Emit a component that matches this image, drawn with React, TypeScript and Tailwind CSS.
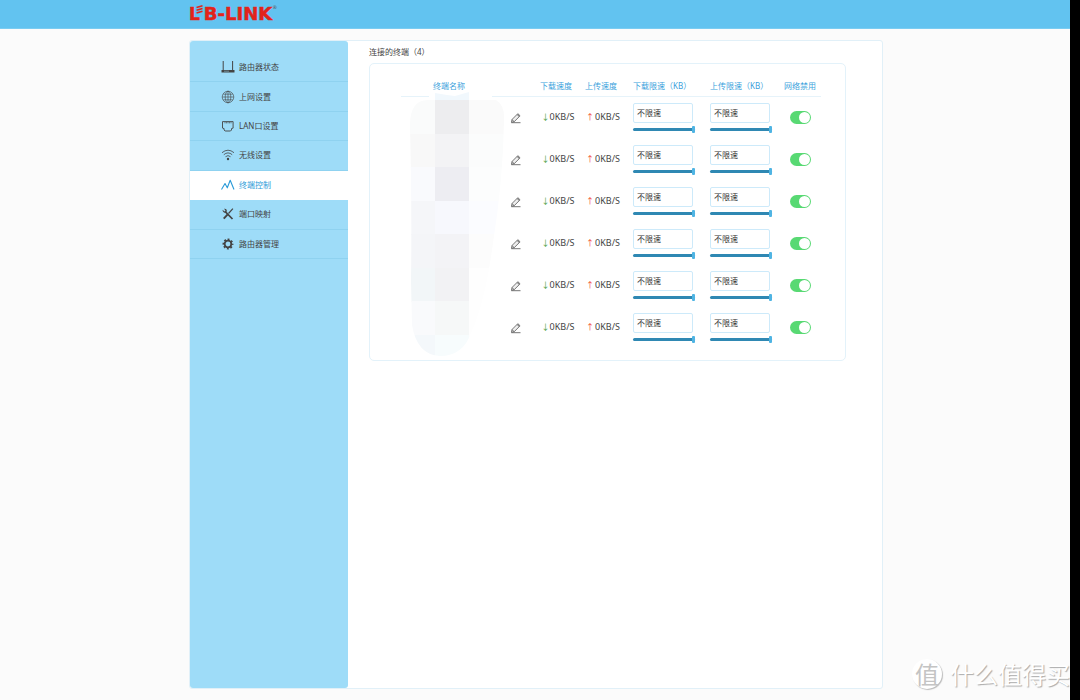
import type { ReactNode } from 'react';

const FONT = "font-['Noto_Sans','Noto_Sans_CJK_SC',sans-serif]";

function RouterIcon() {
  return (
    <svg viewBox="0 0 14 14" className="h-[14px] w-[14px]" fill="none" stroke="currentColor" strokeWidth="1">
      <path d="M2.2 1v9M11.6 1v9" />
      <path d="M.5 10h13v2.5H.5z" fill="currentColor" stroke="none" />
      <path d="M3 11.2h5" stroke="#9edcf8" strokeWidth=".5" />
    </svg>
  );
}

function GlobeIcon() {
  return (
    <svg viewBox="0 0 14 14" className="h-[14px] w-[14px]" fill="none" stroke="currentColor" strokeWidth=".6">
      <circle cx="7" cy="7" r="5.8" />
      <ellipse cx="7" cy="7" rx="2.8" ry="5.8" />
      <path d="M7 1.2v11.6M1.200 7h11.600M2.200 4.200h9.600M2.200 9.800h9.600" />
    </svg>
  );
}

function LanIcon() {
  return (
    <svg viewBox="0 0 14 14" className="h-[14px] w-[14px]" fill="none" stroke="currentColor" strokeWidth=".9">
      <path d="M1.500 2.600h10.600v6.500l-1.600.5v1.400l-1 1H4.100l-1-1V9.600L1.500 9.100z" />
      <path d="M4 3v1.400M5.500 3v1.400M7 3v1.400M8.500 3v1.400M10 3v1.400" strokeWidth=".6" />
    </svg>
  );
}

function WifiIcon() {
  return (
    <svg viewBox="0 0 14 14" className="h-[14px] w-[14px]" fill="none" stroke="currentColor" strokeWidth=".8">
      <path d="M1 4.700Q7-.3 13 4.700M2.800 6.700Q7 3.100 11.200 6.700M4.500 8.700Q7 6.500 9.500 8.700" />
      <circle cx="7" cy="11" r="1.200" fill="currentColor" stroke="none" />
    </svg>
  );
}

function ChartIcon() {
  return (
    <svg viewBox="0 0 14 14" className="h-[14px] w-[14px]" fill="none" stroke="currentColor" strokeWidth="1.1" strokeLinejoin="round">
      <path d="M.5 11.500 4 5.500 6.300 9.800 9.200 2.200 13 11.500" />
    </svg>
  );
}

function ToolsIcon() {
  return (
    <svg viewBox="0 0 14 14" className="h-[14px] w-[14px]" fill="none" stroke="currentColor">
      <path d="M4.200 4.700 11.500 12" strokeWidth="1.700" />
      <path d="M1.600 2.800 3.500 4.500 4.500 3.600 3 1.700C5 1.300 6.300 2.700 5.700 4.600L4.600 5.600C3 6.100 1.500 4.800 1.600 2.800z" fill="currentColor" stroke="none" />
      <path d="M11.900 1.700 7.500 6.500" strokeWidth="1.200" />
      <path d="M6.700 7.400 2.700 11.600" strokeWidth="2" />
    </svg>
  );
}

function GearIcon() {
  return (
    <svg viewBox="0 0 14 14" className="h-[14px] w-[14px]" fill="none" stroke="currentColor">
      <circle cx="7" cy="7" r="3.300" strokeWidth="1.800" />
      <circle cx="7" cy="7" r="4.600" strokeWidth="1.700" strokeDasharray="1.900 1.713" strokeDashoffset=".95" />
    </svg>
  );
}

function PencilIcon() {
  return (
    <svg viewBox="0 0 12 12" className="h-3 w-3" fill="none" stroke="#666" strokeWidth=".9">
      <path d="M1.500 10.300 2 7.500 7.800 1.700 10.100 3.800 4.200 9.700z" fill="#eee" />
      <path d="M7.800 1.700 10.100 3.800 9 5 6.700 2.800z" fill="#888" stroke="none" />
      <path d="M2 7.600 4.200 9.700M1.300 10.700H10.500" />
    </svg>
  );
}

const NAV: { label: string; icon: ReactNode; active?: boolean }[] = [
  { label: '路由器状态', icon: <RouterIcon /> },
  { label: '上网设置', icon: <GlobeIcon /> },
  { label: 'LAN口设置', icon: <LanIcon /> },
  { label: '无线设置', icon: <WifiIcon /> },
  { label: '终端控制', icon: <ChartIcon />, active: true },
  { label: '端口映射', icon: <ToolsIcon /> },
  { label: '路由器管理', icon: <GearIcon /> },
];

const MOSAIC: string[][] = [
  ['#fafbfb', '#ededef', '#fafafa'],
  ['#f8f8f8', '#f3f3f5', '#fbfcfc'],
  ['#f9fafd', '#ededf2', '#fcfdfd'],
  ['#f5f6f9', '#f7f8fd', '#fbfcff'],
  ['#f4f5f8', '#f3f3f6', '#fcfcfc'],
  ['#f2f6f8', '#f2f2f4', '#fefefe'],
  ['#f9fafc', '#f6f8f8', '#fefefe'],
  ['#f4f8fb', '#f7fcfd', '#fefefe'],
];

function NameMosaic() {
  return (
    <svg viewBox="0 0 100 268" className="absolute top-[-6px] left-2 h-[268px] w-[100px]" aria-hidden="true">
      <clipPath id="smudge">
        <path d="M1 34Q1 9 19 9H87Q96 14 95 30Q94 90 84 152Q76 212 62 242Q54 265 31 265Q8 264 3 234L2 190Q3 120 1 34z" />
      </clipPath>
      <path d="M20 3H83V9H20z" fill="#fff" />
      <path d="M26 2 38 4 46 5 60 1V10H26z" fill="#f1f8fd" />
      <g clipPath="url(#smudge)" shapeRendering="crispEdges">
        {MOSAIC.map((row, r) =>
          row.map((fill, c) => (
            <rect key={`${r}-${c}`} x={[0, 26, 60][c]} y={9 + r * 33.5} width={[26, 34, 40][c]} height={34} fill={fill} />
          )),
        )}
      </g>
    </svg>
  );
}

function LimitCell({ label }: { label: string }) {
  return (
    <td className="p-0 pl-2 align-top">
      <div className="flex h-[42px] flex-col pt-[6px]">
        <input
          type="text"
          aria-label={label}
          defaultValue="不限速"
          className="h-5 w-[60px] rounded-[2px] border border-[#cdeafa] bg-white px-[3px] text-[8px] leading-none text-[#333] outline-none"
        />
        <input
          type="range"
          aria-label={`${label}滑块`}
          defaultValue={100}
          className="mt-[3px] h-[7px] w-[62px] appearance-none bg-transparent [&::-webkit-slider-runnable-track]:h-[3px] [&::-webkit-slider-runnable-track]:rounded-full [&::-webkit-slider-runnable-track]:bg-[#2f88b3] [&::-webkit-slider-thumb]:mt-[-2px] [&::-webkit-slider-thumb]:h-[7px] [&::-webkit-slider-thumb]:w-[3px] [&::-webkit-slider-thumb]:appearance-none [&::-webkit-slider-thumb]:rounded-[1px] [&::-webkit-slider-thumb]:bg-[#4fb4e3]"
        />
      </div>
    </td>
  );
}

export default function App() {
  return (
    <div className={`${FONT} flex min-h-screen text-[8px] leading-3 text-[#444]`}>
      <div className="relative flex flex-1 flex-col overflow-hidden bg-[#fbfbfb]">
        <header className="h-[29px] border-b border-[#7accf2] bg-[#62c3f0] pl-0.5">
          <div className="mx-auto flex h-7 w-full max-w-[694px] items-center">
            <a
              href="#"
              aria-label="LB-LINK"
              className="flex items-center font-['DejaVu_Sans',sans-serif] text-[17px] leading-none font-bold text-[#e2231a] [-webkit-text-stroke:0.5px_#e2231a]"
            >
              <span>L</span>
              <svg viewBox="0 0 8 10" className="-ml-1 h-[10px] w-2 self-start" fill="none" stroke="currentColor" strokeWidth="1.500">
                <path d="M.5 2.500 6.500 .8M.5 5.200 6.500 3.500M.5 8 6.500 6.300" />
              </svg>
              <span className="text-[18px]">B-LINK</span>
              <span className="self-start text-[5px] leading-none font-normal text-[#555] [-webkit-text-stroke:0]">®</span>
            </a>
          </div>
        </header>

        <div className="flex flex-1 pt-[11px] pb-[11px] pl-0.5">
          <div className="mx-auto flex w-full max-w-[694px] rounded-[3px] border border-[#e1f0f8] bg-white">
            <nav className="w-[158px] shrink-0 rounded-[3px] bg-[#9edcf8] pt-3">
              <ul className="flex h-[206px] flex-col">
                {NAV.map((item) => (
                  <li key={item.label} className="flex-1">
                    <a
                      href="#"
                      className={
                        item.active
                          ? 'flex h-full items-center gap-1 bg-white pl-[31px] text-[#2a9ad8]'
                          : 'flex h-full items-center gap-1 border-b border-[#8fd2f0] pl-[31px] text-[#444]'
                      }
                    >
                      {item.icon}
                      <span>{item.label}</span>
                    </a>
                  </li>
                ))}
              </ul>
            </nav>

            <main className="min-w-0 flex-1 pt-[5px] pr-9 pl-[21px]">
              <h1>连接的终端（4）</h1>
              <section className="mt-[5px] rounded-[5px] border border-[#e3f2fa] pt-[11px] pr-6 pb-[11px] pl-[31px]">
                <table className="w-full table-fixed border-collapse">
                  <colgroup>
                    <col className="w-24" />
                    <col className="w-[38px]" />
                    <col className="w-[42px]" />
                    <col className="w-12" />
                    <col className="w-[77px]" />
                    <col className="w-[77px]" />
                    <col />
                  </colgroup>
                  <thead>
                    <tr className="h-[21px] border-b border-[#e6f3fa] whitespace-nowrap text-[#3a9fdc]">
                      <th className="p-0 pt-0.5 font-normal">终端名称</th>
                      <td className="p-0" />
                      <th className="p-0 pt-0.5 font-normal">下载速度</th>
                      <th className="p-0 pt-0.5 font-normal">上传速度</th>
                      <th className="p-0 pt-0.5 pl-2 text-left font-normal">下载限速（KB）</th>
                      <th className="p-0 pt-0.5 pl-2 text-left font-normal">上传限速（KB）</th>
                      <th className="p-0 pt-0.5 font-normal">网络禁用</th>
                    </tr>
                  </thead>
                  <tbody>
                    {[1, 2, 3, 4, 5, 6].map((n) => (
                      <tr key={n} className="h-[42px] whitespace-nowrap">
                        {n === 1 && (
                          <td rowSpan={6} className="relative p-0">
                            <NameMosaic />
                          </td>
                        )}
                        <td className="p-0">
                          <button type="button" aria-label="编辑" className="mx-auto block">
                            <PencilIcon />
                          </button>
                        </td>
                        <td className="p-0 pb-0.5">
                          <div className="flex justify-center pl-1">
                            <span className="text-[#3f9c35]">↓</span>
                            <span className="text-[9px]">0KB/S</span>
                          </div>
                        </td>
                        <td className="p-0 pb-0.5">
                          <div className="flex justify-center gap-px pl-1">
                            <span className="text-[#f0432c]">↑</span>
                            <span className="text-[9px]">0KB/S</span>
                          </div>
                        </td>
                        <LimitCell label={`终端${n}下载限速`} />
                        <LimitCell label={`终端${n}上传限速`} />
                        <td className="p-0 pb-px">
                          <input
                            type="checkbox"
                            defaultChecked
                            aria-label={`终端${n}网络禁用`}
                            className="mx-auto flex h-[13px] w-[21px] appearance-none items-center justify-end rounded-full bg-[#58d973] p-px before:h-[11px] before:w-[11px] before:rounded-full before:bg-white"
                          />
                        </td>
                      </tr>
                    ))}
                  </tbody>
                </table>
              </section>
            </main>
          </div>
        </div>

        <div className="absolute right-0 bottom-2 flex items-center gap-2 font-['Noto_Sans_CJK_SC',sans-serif] whitespace-nowrap">
          <span className="flex h-[30px] w-[30px] items-center justify-center rounded-full bg-white text-[24px] leading-none text-[#c4c4c4] shadow-[1px_1px_1px_#bbb]">
            值
          </span>
          <span className="text-[24px] leading-9 text-white [text-shadow:1px_1px_1px_#aaa]">什么值得买</span>
        </div>
      </div>
      <div className="w-[10px] shrink-0 bg-black" />
    </div>
  );
}
